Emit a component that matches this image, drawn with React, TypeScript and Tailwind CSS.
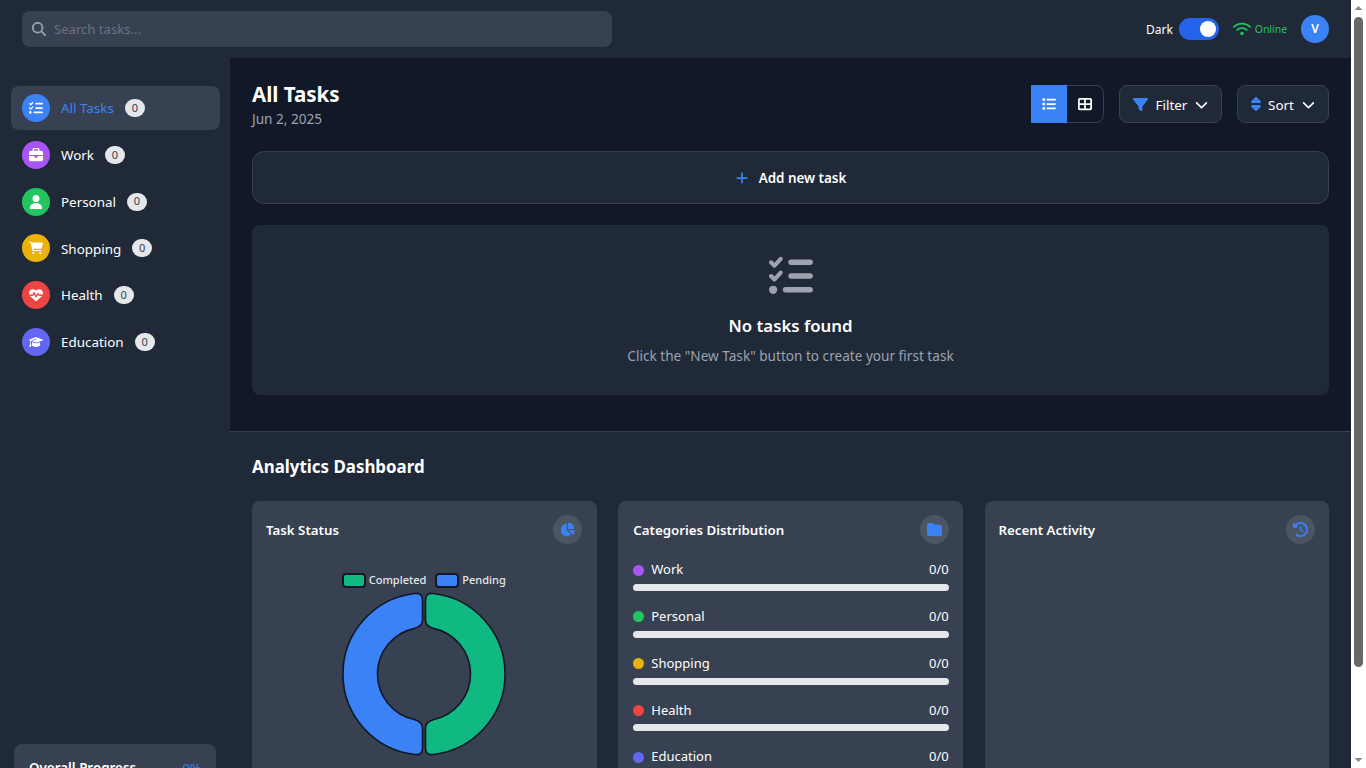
import { FaMagnifyingGlass, FaListCheck, FaBriefcase, FaUser, FaCartShopping, FaHeartPulse, FaGraduationCap, FaWifi, FaList, FaTableCellsLarge, FaFilter, FaSort, FaChevronDown, FaPlus, FaChartPie, FaFolder, FaClockRotateLeft } from "react-icons/fa6";

const cats = [
  { name: "All Tasks", Icon: FaListCheck, bg: "bg-[#3b82f6]", active: true },
  { name: "Work", Icon: FaBriefcase, bg: "bg-[#a855f7]" },
  { name: "Personal", Icon: FaUser, bg: "bg-[#22c55e]" },
  { name: "Shopping", Icon: FaCartShopping, bg: "bg-[#eab308]" },
  { name: "Health", Icon: FaHeartPulse, bg: "bg-[#ef4444]" },
  { name: "Education", Icon: FaGraduationCap, bg: "bg-[#6366f1]" },
];
const dist = cats.slice(1);

function CardHead({ title, Icon }: { title: string; Icon: any }) {
  return (
    <div className="flex items-center justify-between">
      <h3 className="text-[13.3px] font-semibold text-white pt-[2px]">{title}</h3>
      <div className="w-[29px] h-[29px] rounded-full bg-[#4b5563] flex items-center justify-center text-[#3b82f6]">
        <Icon size={15} />
      </div>
    </div>
  );
}

export default function App() {
  return (
    <div className="h-screen overflow-hidden flex font-['Noto_Sans','Liberation_Sans',sans-serif]">
      <div className="flex-1 min-w-0">
        <div className="h-[868px] bg-[#1f2937] text-white flex flex-col">
          <header className="h-[58px] shrink-0 bg-[#1f2937] flex items-center justify-between px-[22px]">
            <div className="w-[590px] h-9 rounded-lg bg-[#374151] flex items-center pl-[10px] gap-[8px] text-[#9ca3af]">
              <FaMagnifyingGlass size={14} />
              <span className="text-[13.1px] text-[#6b7280] pt-[2px]">Search tasks...</span>
            </div>
            <div className="flex items-center">
              <span className="text-[12px] mr-[6px] pt-[1px]">Dark</span>
              <div className="w-10 h-[22px] rounded-full bg-[#2563eb] flex items-center justify-end pr-[3px] mr-[14px]">
                <div className="w-4 h-4 rounded-full bg-white" />
              </div>
              <FaWifi size={18} className="text-[#22c55e] mr-[4px]" />
              <span className="text-[10.4px] text-[#22c55e] mr-[14px] pt-[2px]">Online</span>
              <div className="w-7 h-7 rounded-full bg-[#3b82f6] flex items-center justify-center text-[12px] font-semibold">V</div>
            </div>
          </header>
          <div className="flex flex-1">
            <aside className="w-[230px] shrink-0 flex flex-col justify-between pt-[28px] pb-[14px] pl-[11px] pr-[10px]">
              <nav className="flex flex-col gap-[2.75px]">
                {cats.map(({ name, Icon, bg, active }) => (
                  <div key={name} className={`h-11 rounded-lg flex items-center pl-[11px] ${active ? "bg-[#374151]" : ""}`}>
                    <div className={`w-7 h-7 rounded-full ${bg} flex items-center justify-center text-white`}>
                      <Icon size={14} />
                    </div>
                    <span className={`ml-[11px] text-[13.4px] pt-[1px] ${active ? "text-[#3b82f6]" : "text-white"}`}>{name}</span>
                    <span className="ml-[11px] w-5 h-[18px] rounded-full bg-[#e5e7eb] text-[#374151] text-[11px] flex items-center justify-center">0</span>
                  </div>
                ))}
              </nav>
              <div className="ml-[3px] mr-[4px] h-[110px] rounded-lg bg-[#374151] px-[15px] pt-[14px]">
                <div className="flex justify-between text-[13.4px]">
                  <span className="font-semibold">Overall Progress</span>
                  <span className="text-[#3b82f6]">0%</span>
                </div>
                <div className="mt-3 h-2 rounded-full bg-[#e5e7eb]" />
              </div>
            </aside>
            <main className="flex-1 min-w-0 flex flex-col">
              <section className="bg-[#111827] px-[22px] pt-[22px] pb-[36px]">
                <div className="flex items-start justify-between">
                  <div>
                    <h1 className="text-[20.5px] leading-[28px] font-bold">All Tasks</h1>
                    <p className="text-[13.6px] leading-[19px] text-[#9ca3af] pt-[1px]">Jun 2, 2025</p>
                  </div>
                  <div className="flex items-center mt-[5px]">
                    <div className="flex w-[73px] h-[38px] rounded-lg border border-[#374151]">
                      <div className="w-9 -ml-px -my-px bg-[#3b82f6] flex items-center justify-center"><FaList size={14} /></div>
                      <div className="flex-1 flex items-center justify-center"><FaTableCellsLarge size={14} /></div>
                    </div>
                    <div className="ml-[15px] w-[103px] h-[38px] rounded-lg border border-[#374151] bg-[#1f2937] flex items-center justify-center gap-[8px] text-[13.4px]">
                      <FaFilter size={15} className="text-[#3b82f6]" />
                      <span className="pt-[2px]">Filter</span>
                      <FaChevronDown size={13} />
                    </div>
                    <div className="ml-[15px] w-[92px] h-[38px] rounded-lg border border-[#374151] bg-[#1f2937] flex items-center justify-center text-[13.4px]">
                      <FaSort className="w-[10px] h-[16px] text-[#3b82f6]" />
                      <span className="pt-[2px] ml-[7px] mr-[8px]">Sort</span>
                      <FaChevronDown size={13} />
                    </div>
                  </div>
                </div>
                <div className="mt-[23px] h-[53px] rounded-xl border border-[#374151] bg-[#1f2937] flex items-center justify-center gap-[10px]">
                  <FaPlus size={14} className="text-[#3b82f6]" />
                  <span className="text-[13.4px] font-semibold pt-[2px]">Add new task</span>
                </div>
                <div className="mt-[21px] h-[170px] rounded-lg bg-[#1f2937] flex flex-col items-center pt-[29px]">
                  <FaListCheck size={44} className="text-[#9ca3af]" />
                  <h2 className="mt-[14px] text-[16.8px] leading-[28px] font-semibold">No tasks found</h2>
                  <p className="mt-[6px] text-[13.6px] leading-[20px] text-[#9ca3af]">Click the "New Task" button to create your first task</p>
                </div>
              </section>
              <section className="flex-1 border-t border-[#374151] bg-[#1f2937] px-[22px] pt-[21px] pb-[22px]">
                <h2 className="text-[16.9px] leading-[28px] font-bold">Analytics Dashboard</h2>
                <div className="mt-[20px] grid grid-cols-3 gap-x-[21.75px]">
                  <div className="h-[345px] rounded-lg bg-[#374151] pl-[14px] pr-[15px] pt-[14px]">
                    <CardHead title="Task Status" Icon={FaChartPie} />
                    <div className="mt-[28px] flex justify-center items-center text-[11px] font-medium text-[#e5e7eb]">
                      <span className="w-[24px] h-[15px] rounded-[4px] bg-[#10b981] border-2 border-[#111827] mr-[3px]" />
                      <span>Completed</span>
                      <span className="w-[24px] h-[15px] rounded-[4px] bg-[#3b82f6] border-2 border-[#111827] ml-[9px] mr-[3px]" />
                      <span>Pending</span>
                    </div>
                    <svg viewBox="-82 -82 164 164" className="w-[166px] h-[166px] mx-auto mt-[2px]">
                      <path d="M1.5 -73 Q1.5 -80.4 9 -79.5 A80 80 0 0 1 9 79.5 Q1.5 80.4 1.5 73 L1.5 53 Q1.5 47.5 9 45.1 A46 46 0 0 0 9 -45.1 Q1.5 -47.5 1.5 -53 Z" fill="#10b981" stroke="#111827" strokeWidth="1.6" />
                      <path d="M-1.5 -73 Q-1.5 -80.4 -9 -79.5 A80 80 0 0 0 -9 79.5 Q-1.5 80.4 -1.5 73 L-1.5 53 Q-1.5 47.5 -9 45.1 A46 46 0 0 1 -9 -45.1 Q-1.5 -47.5 -1.5 -53 Z" fill="#3b82f6" stroke="#111827" strokeWidth="1.6" />
                    </svg>
                  </div>
                  <div className="h-[345px] rounded-lg bg-[#374151] pl-[15px] pr-[14px] pt-[14px]">
                    <CardHead title="Categories Distribution" Icon={FaFolder} />
                    <div className="mt-[15px] flex flex-col gap-[14.75px]">
                      {dist.map(({ name, bg }) => (
                        <div key={name}>
                          <div className="h-[20px] pt-[2px] flex items-center justify-between text-[13px]">
                            <span className="flex items-center">
                              <span className={`w-[11px] h-[11px] rounded-full ${bg} mr-[7px]`} />
                              {name}
                            </span>
                            <span>0/0</span>
                          </div>
                          <div className="mt-[5px] h-[7px] rounded-full bg-[#e5e7eb]" />
                        </div>
                      ))}
                    </div>
                  </div>
                  <div className="h-[345px] rounded-lg bg-[#374151] pl-[14px] pr-[14px] pt-[14px]">
                    <CardHead title="Recent Activity" Icon={FaClockRotateLeft} />
                  </div>
                </div>
              </section>
            </main>
          </div>
        </div>
      </div>
      <div className="w-[15px] shrink-0 h-full bg-white flex flex-col items-center">
        <svg width="15" height="17" viewBox="0 0 15 17" className="shrink-0"><path d="M3.5 10 L7.5 6 L11.5 10 Z" fill="#8a8a8a" /></svg>
        <div className="w-[9px] h-[650px] rounded-full bg-[#686868]" />
        <div className="flex-1" />
        <svg width="15" height="17" viewBox="0 0 15 17" className="shrink-0"><path d="M3.5 7 L7.5 11 L11.5 7 Z" fill="#8a8a8a" /></svg>
      </div>
    </div>
  );
}
